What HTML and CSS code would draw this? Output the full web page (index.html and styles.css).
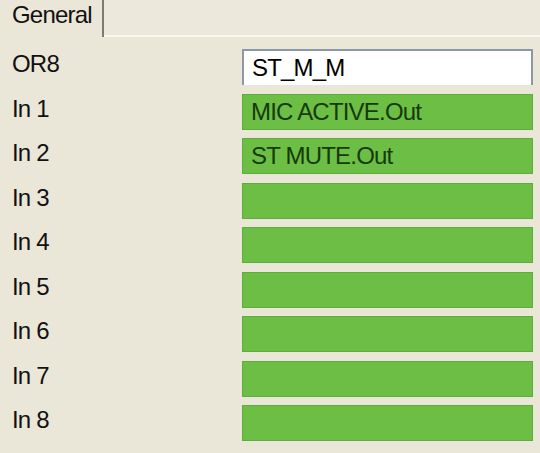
FILE: index.html
```html
<!DOCTYPE html>
<html>
<head>
<meta charset="utf-8">
<link rel="stylesheet" href="styles.css">
</head>
<body>
<div class="window">
  <div class="tabstrip">
    <div class="tab">General</div>
    <div class="tabfill"></div>
  </div>
  <div class="panel">
    <div class="row"><div class="label">OR8</div><div class="field white">ST_M_M</div></div>
    <div class="row"><div class="label">In 1</div><div class="field green">MIC ACTIVE.Out</div></div>
    <div class="row"><div class="label">In 2</div><div class="field green">ST MUTE.Out</div></div>
    <div class="row"><div class="label">In 3</div><div class="field green"></div></div>
    <div class="row"><div class="label">In 4</div><div class="field green"></div></div>
    <div class="row"><div class="label">In 5</div><div class="field green"></div></div>
    <div class="row"><div class="label">In 6</div><div class="field green"></div></div>
    <div class="row"><div class="label">In 7</div><div class="field green"></div></div>
    <div class="row"><div class="label">In 8</div><div class="field green"></div></div>
  </div>
</div>
</body>
</html>
```
FILE: styles.css
```css
html, body {
  margin: 0;
  padding: 0;
  background: #EAE6D8;
}
.window {
  width: 540px;
  height: 453px;
  overflow: hidden;
  font-family: "Liberation Sans", Arial, sans-serif;
  color: #111;
  letter-spacing: -0.8px;
}
.tabstrip {
  display: flex;
  height: 37px;
}
.tab {
  width: 90px;
  padding-left: 12px;
  font-size: 24px;
  line-height: 30px;
  border-right: 2px solid #7E7B72;
  box-sizing: content-box;
}
.tabfill {
  flex: 1;
  border-bottom: 2px solid #FAF8EE;
  background: #ECE9DC;
}
.panel {
  display: flex;
  flex-direction: column;
  gap: 8.5px;
  padding-top: 12px;
}
.row {
  display: flex;
  align-items: center;
  height: 36px;
}
.label {
  width: 242px;
  padding-left: 12px;
  box-sizing: border-box;
  font-size: 24px;
  margin-top: -6px;
}
.field {
  width: 291px;
  height: 36px;
  box-sizing: border-box;
  font-size: 24px;
  padding-left: 8px;
  display: flex;
  align-items: center;
}
.white {
  background: #FFFFFF;
  border: 2px solid #8A98A8;
  border-bottom: none;
  color: #000;
}
.green {
  background: #6CBE45;
  border: 1px solid #5AAE3C;
  color: #163A0C;
}
```
